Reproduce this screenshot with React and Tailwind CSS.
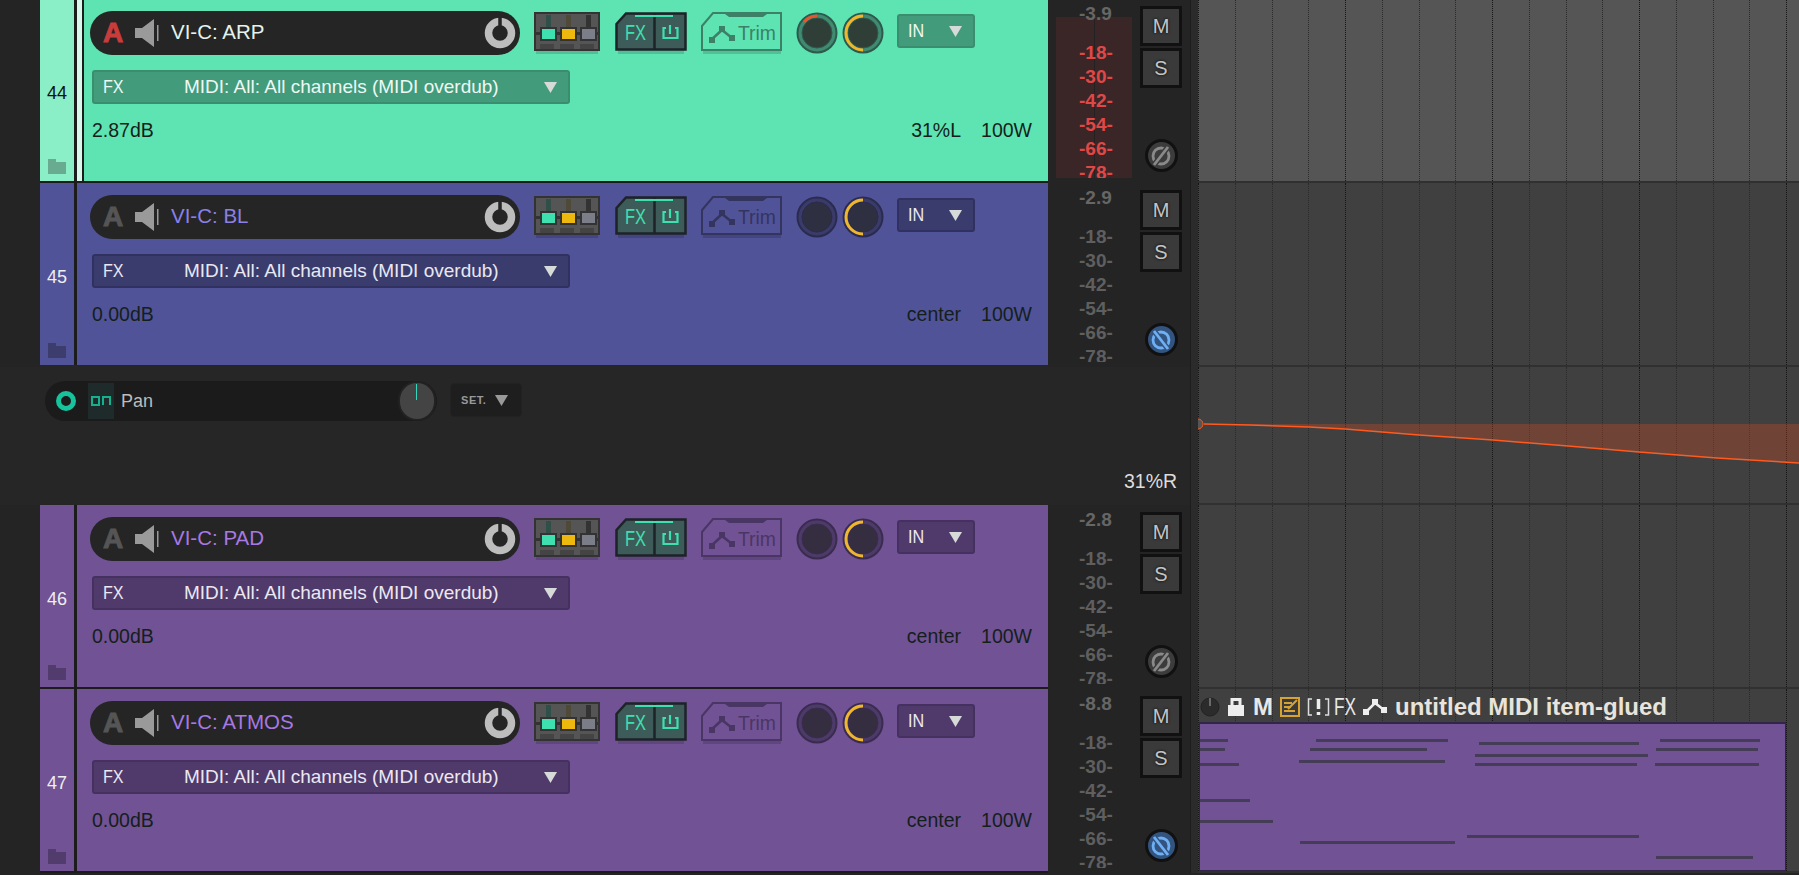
const sans = "font-['Liberation_Sans',Arial,sans-serif]";

const TRACKS = {
  arp: {
    num: "44", name: "VI-C: ARP", vol: "2.87dB", pan: "31%L", peak: "-3.9",
    body: "bg-[#5ee4b2]", numBg: "bg-[#8aeec6]", numText: "text-[#111]",
    nameText: "text-[#e4f3ee]", aText: "text-[#c93c3c]",
    bar: "bg-[#429c7b] border-[#3b8d6f]", barText: "text-[#eef8f4]",
    folder: "#68ab90", shadow: "#4fc097", trim: "#3c8068", ring: "#3f8a70", inner: "#2f3f38", ringEdge: "#2d5a4c",
    selected: true, meterHot: true, redArc: true, phaseOn: false,
  },
  bl: {
    num: "45", name: "VI-C: BL", vol: "0.00dB", pan: "center", peak: "-2.9",
    body: "bg-[#515398]", numBg: "bg-[#515398]", numText: "text-[#eee]",
    nameText: "text-[#8a80ea]", aText: "text-[#555]",
    bar: "bg-[#3b3c6e] border-[#303160]", barText: "text-[#e8e8f2]",
    folder: "#3c3d6c", shadow: "#444580", trim: "#34355f", ring: "#3a3b68", inner: "#2e2f40", ringEdge: "#2a2b50", phaseOn: true,
  },
  pad: {
    num: "46", name: "VI-C: PAD", vol: "0.00dB", pan: "center", peak: "-2.8",
    body: "bg-[#715295]", numBg: "bg-[#715295]", numText: "text-[#eee]",
    nameText: "text-[#a878e4]", aText: "text-[#555]",
    bar: "bg-[#503a6b] border-[#443160]", barText: "text-[#ece8f2]",
    folder: "#523c6e", shadow: "#60467f", trim: "#4a3664", ring: "#4d3a68", inner: "#342e40", ringEdge: "#3a2c50", phaseOn: false,
  },
  atmos: {
    num: "47", name: "VI-C: ATMOS", vol: "0.00dB", pan: "center", peak: "-8.8",
    body: "bg-[#715295]", numBg: "bg-[#715295]", numText: "text-[#eee]",
    nameText: "text-[#a878e4]", aText: "text-[#555]",
    bar: "bg-[#503a6b] border-[#443160]", barText: "text-[#ece8f2]",
    folder: "#523c6e", shadow: "#60467f", trim: "#4a3664", ring: "#4d3a68", inner: "#342e40", ringEdge: "#3a2c50", phaseOn: true,
  },
};

const SCALE = ["-18-", "-30-", "-42-", "-54-", "-66-", "-78-"];
const GRID = Array.from({ length: 17 }, (_, i) => i);

// x1, x2, y inside the item
const NOTES = [
  [1, 29, 17], [117, 249, 17], [280, 440, 20], [461, 561, 17],
  [1, 26, 26], [111, 228, 26], [457, 559, 26], [276, 449, 32],
  [1, 40, 41], [100, 246, 38], [276, 438, 41], [456, 560, 41],
  [1, 51, 77], [1, 74, 98], [101, 256, 119], [268, 440, 113], [457, 554, 134],
];

function GridLines() {
  return (
    <>
      {GRID.map((i) => (
        <div
          key={i}
          className={`absolute top-0 bottom-0 border-l border-dotted ${i % 4 === 0 ? "border-[#151515]" : "border-[#2a2a2a]"}`}
          style={{ left: i * 36.75 }}
        />
      ))}
    </>
  );
}

function Speaker() {
  return (
    <svg width="24" height="28" viewBox="0 0 24 28">
      <path d="M0 9h7L19 0v28L7 19H0z" fill="#9a9a9a" />
      <rect x="22" y="6" width="1.5" height="16" fill="#9a9a9a" />
    </svg>
  );
}

function PowerKnob() {
  return (
    <svg width="32" height="32" viewBox="0 0 32 32">
      <circle cx="16" cy="16" r="11.5" fill="none" stroke="#bdbdbd" strokeWidth="7.5" />
      <path d="M16 0v13" stroke="#252525" strokeWidth="3.5" />
    </svg>
  );
}

function MixerIcon({ t }) {
  return (
    <svg width="66" height="42" viewBox="0 0 66 42" className="shrink-0">
      <rect x="2" y="36" width="62" height="6" fill={t.shadow} />
      <rect x="1" y="1" width="64" height="37" fill="#555" stroke="#333" strokeWidth="2" />
      <rect x="12" y="3" width="5" height="18" fill="#2f4f48" />
      <rect x="32" y="3" width="5" height="18" fill="#4f4a38" />
      <rect x="52" y="3" width="5" height="18" fill="#333" />
      <rect x="2" y="20" width="62" height="3" fill="#333" />
      <rect x="7" y="16" width="15" height="12" fill="#3fe0b0" stroke="#333" strokeWidth="2" />
      <rect x="27" y="16" width="15" height="12" fill="#eeb90f" stroke="#333" strokeWidth="2" />
      <rect x="47" y="16" width="15" height="12" fill="#7b7e88" stroke="#333" strokeWidth="2" />
      <rect x="6" y="32" width="14" height="5" fill="#444" />
      <rect x="26" y="32" width="14" height="5" fill="#444" />
      <rect x="46" y="32" width="14" height="5" fill="#444" />
    </svg>
  );
}

function FxIcon({ t }) {
  return (
    <svg width="72" height="42" viewBox="0 0 72 42" className="shrink-0 ml-[15px]">
      <rect x="3" y="36" width="66" height="6" fill={t.shadow} />
      <path d="M1.5 12L11 1.5h59.5v36H1.5z" fill="#3d5b58" stroke="#1d2327" strokeWidth="2.5" />
      <path d="M39.5 2v35" stroke="#1d2327" strokeWidth="2.5" />
      <rect x="20" y="3" width="38" height="2" fill="#3fe0b0" />
      <text x="10" y="28" fill="#3fe0b0" fontFamily="Liberation Sans" fontSize="22" textLength="21" lengthAdjust="spacingAndGlyphs">FX</text>
      <path d="M55 13v9M51 16h-2.5v10h14V16H60" fill="none" stroke="#3fe0b0" strokeWidth="2.2" />
    </svg>
  );
}

function TrimIcon({ t }) {
  return (
    <svg width="82" height="42" viewBox="0 0 82 42" className="shrink-0 ml-[14px]">
      <rect x="2" y="37" width="78" height="5" fill={t.shadow} />
      <path d="M1 14L12 1h68v37H1z" fill="none" stroke={t.trim} strokeWidth="2" />
      <path d="M24 2h42l-4 3H28z" fill={t.trim} />
      <path d="M10 28l11-10 10 8" fill="none" stroke={t.trim} strokeWidth="2.5" />
      <rect x="8" y="25" width="6" height="6" fill={t.trim} />
      <rect x="18" y="14" width="6" height="6" fill={t.trim} />
      <rect x="28" y="23" width="6" height="6" fill={t.trim} />
      <text x="37" y="28" fill={t.trim} fontFamily="Liberation Sans" fontSize="20" textLength="38" lengthAdjust="spacingAndGlyphs">Trim</text>
    </svg>
  );
}

function Knob({ t, arc, color }) {
  return (
    <svg width="42" height="42" viewBox="0 0 42 42" className="shrink-0">
      <circle cx="21" cy="21" r="19.5" fill={t.ring} stroke={t.ringEdge} strokeWidth="2" />
      <circle cx="21" cy="21" r="15" fill={t.inner} stroke={t.ringEdge} strokeWidth="1" />
      {arc && <path d={arc} fill="none" stroke={color} strokeWidth="3" />}
    </svg>
  );
}

function Caret({ color = "#d6dad8" }) {
  return (
    <svg width="13" height="11" viewBox="0 0 13 11" className="shrink-0">
      <path d="M0 0h13L6.5 11z" fill={color} />
    </svg>
  );
}

function Folder({ color }) {
  return (
    <svg width="18" height="15" viewBox="0 0 18 15">
      <path d="M0 0h8v3h10v12H0z" fill={color} />
    </svg>
  );
}

function PhaseButton({ on }) {
  const c = on ? "#6fb0f5" : "#8a8a8a";
  return (
    <div className={`w-[33px] h-[33px] rounded-full border-[3px] border-[#111] flex items-center justify-center ${on ? "bg-[#33547f]" : "bg-[#3c3c3c]"}`}>
      <svg width="24" height="24" viewBox="0 0 24 24">
        <circle cx="12" cy="12" r="8" fill="none" stroke={c} strokeWidth="2.8" />
        {on ? (
          <path d="M5 3l14 18" stroke="#33547f" strokeWidth="5.5" />
        ) : (
          <path d="M19 3L5 21" stroke="#3c3c3c" strokeWidth="5.5" />
        )}
        {on ? (
          <path d="M5 3l14 18" stroke={c} strokeWidth="2.8" />
        ) : (
          <path d="M19 3L5 21" stroke={c} strokeWidth="2.8" />
        )}
      </svg>
    </div>
  );
}

function MSButton({ label }) {
  return (
    <div className={`w-[42px] h-[40px] bg-[#3a3a3a] border-[3px] border-[#111] flex items-center justify-center text-[20px] text-[#c4c4c4] [text-shadow:0_0_3px_#000] ${sans}`}>
      {label}
    </div>
  );
}

function MeterColumn({ t }) {
  return (
    <div className="flex w-[142px] h-full bg-[#242424] pl-[8px] pt-[7px]">
      <div className={`relative w-[78px] h-[179px] -mt-[7px] overflow-hidden pl-[23px] pt-[3px] font-bold text-[19px] leading-[24px] ${sans}`}>
        {t.meterHot && <div className="absolute left-0 right-[2px] top-[18px] bottom-0 bg-[#3a2626]" />}
        {t.meterHot && <div className="absolute left-[38px] w-[1px] top-[18px] bottom-0 bg-[#222]" />}
        <div className="relative text-[#666] h-[24px]">{t.peak}</div>
        <div className={`relative mt-[15px] ${t.meterHot ? "text-[#e04848]" : "text-[#5f5f5f]"}`}>
          {SCALE.map((s) => (
            <div key={s} className="h-[24px]">{s}</div>
          ))}
        </div>
      </div>
      <div className="flex flex-col ml-[6px] w-[42px] gap-[2px]">
        <MSButton label="M" />
        <MSButton label="S" />
        <div className="flex justify-center mt-[49px]">
          <PhaseButton on={t.phaseOn} />
        </div>
      </div>
    </div>
  );
}

function Divider() {
  return <div className="w-[8px] h-full bg-[#2b2b2b] border-l border-[#1d1d1d] shrink-0" />;
}

function Track({ t, gap, rowH, arrange, children }) {
  return (
    <div className={`flex ${rowH} shrink-0`}>
      <div className="flex w-[1048px] shrink-0 bg-[#242424]">
        <div className="w-[40px] shrink-0" />
        <div className={`flex flex-1 flex-col ${gap}`}>
          <div className="flex flex-1 min-h-0">
            <div className={`relative w-[34px] shrink-0 ${t.numBg}`}>
              <div className={`absolute left-0 right-0 top-[83px] text-center text-[18px] leading-[22px] ${t.numText} ${sans}`}>{t.num}</div>
              <div className="absolute left-[8px] bottom-[7px]"><Folder color={t.folder} /></div>
            </div>
            <div className="w-[3px] shrink-0 bg-[#1c1c1c]" />
            <div className={`relative flex-1 pl-[13px] pt-[12px] ${t.body}`}>
              {t.selected && <div className="absolute left-0 top-0 bottom-0 w-[7px] bg-[#d8f8ec] border-r-2 border-[#1c1c1c]" />}
              <div className="flex items-start">
                <div className={`flex items-center w-[430px] h-[44px] rounded-full bg-[#252525] pl-[13px] pr-[4px] ${sans}`}>
                  <span className={`w-[24px] font-bold text-[28px] leading-none [-webkit-text-stroke:1px_currentColor] ${t.aText}`}>{"A"}</span>
                  <span className="ml-[8px] flex"><Speaker /></span>
                  <span className={`ml-[12px] text-[20.5px] leading-none -mt-[2px] ${t.nameText}`}>{t.name}</span>
                  <span className="ml-auto flex"><PowerKnob /></span>
                </div>
                <div className="flex items-start ml-[14px] mt-[1px]">
                  <MixerIcon t={t} />
                  <FxIcon t={t} />
                  <TrimIcon t={t} />
                  <div className="flex ml-[13px] gap-[4px]">
                    <Knob t={t} arc={t.redArc ? "M21 4A17 17 0 0 0 8 10" : null} color="#e8552f" />
                    <Knob t={t} arc="M21 4A17 17 0 0 0 21 38" color="#f0b72c" />
                  </div>
                  <div className={`flex items-center justify-between w-[78px] h-[34px] ml-[13px] mt-[2px] rounded-[3px] border-2 pl-[9px] pr-[11px] text-[19px] ${t.bar} ${t.barText} ${sans}`}>
                    <span className="inline-block scale-x-[0.85] origin-left">IN</span>
                    <Caret />
                  </div>
                </div>
              </div>
              <div className={`relative flex items-center w-[478px] h-[34px] ml-[2px] mt-[15px] rounded-[3px] border-2 pl-[9px] pr-[11px] text-[19px] ${t.bar} ${t.barText} ${sans}`}>
                <span className="inline-block w-[81px] scale-x-[0.85] origin-left">FX</span>
                <span className="flex-1 whitespace-nowrap">MIDI: All: All channels (MIDI overdub)</span>
                <Caret />
              </div>
              <div className={`flex items-center h-[22px] ml-[2px] mt-[15px] text-[19.5px] leading-[22px] text-[#141f1c] ${sans}`}>
                <span>{t.vol}</span>
                <span className="ml-auto">{t.pan}</span>
                <span className="ml-[20px] mr-[16px]">100W</span>
              </div>
            </div>
          </div>
        </div>
      </div>
      <MeterColumn t={t} />
      <Divider />
      <Arrange className={arrange}>{children}</Arrange>
    </div>
  );
}

function Arrange({ className, children }) {
  return (
    <div className={`relative flex-1 h-full overflow-hidden border-b-2 border-[#303030] ${className}`}>
      <GridLines />
      {children}
    </div>
  );
}

function PanLane() {
  return (
    <div className="flex h-[138px] shrink-0">
      <div className="relative flex w-[1190px] shrink-0 bg-[#262626] pl-[45px] pt-[14px]">
        <div className={`flex items-center w-[392px] h-[40px] rounded-full bg-[#1b1b1b] pr-[3px] ${sans}`}>
          <svg width="20" height="20" viewBox="0 0 20 20" className="ml-[11px]">
            <circle cx="10" cy="10" r="7.5" fill="none" stroke="#17c39c" strokeWidth="5" />
          </svg>
          <div className="flex items-center justify-center w-[26px] h-[36px] ml-[12px] bg-[#1f2b2b]">
            <svg width="20" height="12" viewBox="0 0 20 12">
              <path d="M1 2h7v8H1zM12 10V2h7v8" fill="none" stroke="#17b08f" strokeWidth="2" />
            </svg>
          </div>
          <span className="ml-[7px] text-[18px] text-[#bcbcbc]">Pan</span>
          <div className="relative ml-auto w-[34px] h-[36px] rounded-full bg-[#444] shadow-[0_0_0_2px_#222]">
            <div className="absolute left-[16px] top-[1px] w-[1px] h-[16px] bg-[#34d6c0]" />
          </div>
        </div>
        <div className={`flex items-center justify-between w-[72px] h-[34px] ml-[13px] mt-[2px] rounded-[4px] border border-[#222] bg-[#1e1e1e] pl-[10px] pr-[13px] text-[11px] font-bold tracking-wider text-[#999] ${sans}`}>
          <span>SET.</span>
          <Caret color="#999" />
        </div>
        <span className={`absolute left-[1124px] top-[103px] text-[19.5px] leading-[22px] text-[#ddd] ${sans}`}>31%R</span>
      </div>
      <Divider />
      <Arrange className="bg-[#404040]">
        <svg width="601" height="138" viewBox="1198 367 601 138" className="absolute left-0 top-0">
          <path d="M1204 424L1250 425L1309 427L1345 429L1419 435L1493 440L1568 446L1639 452L1717 458L1799 463V424Z" fill="#e8501f" fillOpacity="0.28" />
          <path d="M1204 424L1250 425L1309 427L1345 429L1419 435L1493 440L1568 446L1639 452L1717 458L1799 463" fill="none" stroke="#ff5a1f" strokeWidth="1.5" />
          <path d="M1198 419A5 5 0 0 1 1198 429" fill="#555" stroke="#ff5a1f" strokeWidth="1" />
        </svg>
      </Arrange>
    </div>
  );
}

function MidiItem() {
  return (
    <>
      <div className={`absolute left-[1px] top-[4px] flex items-center h-[28px] text-[#e8e8e8] ${sans}`}>
        <svg width="20" height="20" viewBox="0 0 20 20" className="ml-[1px]">
          <circle cx="10" cy="10" r="9" fill="#2b2b2b" stroke="#222" />
          <path d="M10 1v8" stroke="#aaa" />
        </svg>
        <svg width="18" height="20" viewBox="0 0 18 20" className="ml-[7px]">
          <path d="M5 9V2.5h8V9" fill="none" stroke="#eee" strokeWidth="3" />
          <rect x="1" y="8" width="16" height="11" fill="#eee" />
        </svg>
        <span className="inline-block w-[20px] ml-[8px] font-bold text-[24px] leading-none">M</span>
        <svg width="20" height="20" viewBox="0 0 20 20" className="ml-[7px]">
          <rect x="1" y="1" width="18" height="18" fill="#3a3a3a" stroke="#d6a332" strokeWidth="2" />
          <path d="M4 6h8M4 10h7M4 14h11M8 12l9-9" stroke="#d6a332" strokeWidth="2" fill="none" />
        </svg>
        <svg width="23" height="20" viewBox="0 0 23 20" className="ml-[7px]">
          <path d="M5 2H1.5v16H5M18 2h3.5v16H18" fill="none" stroke="#ddd" strokeWidth="1.5" />
          <path d="M11.5 2v10M11.5 15v3" stroke="#eee" strokeWidth="3.5" />
        </svg>
        <span className="ml-[4px] inline-block w-[22px] text-[24px] leading-none scale-x-[0.72] origin-left">FX</span>
        <svg width="24" height="18" viewBox="0 0 24 18" className="ml-[7px]">
          <path d="M3 14L12 5l9 7" fill="none" stroke="#eee" strokeWidth="2.5" />
          <rect x="0" y="11" width="6" height="6" fill="#eee" />
          <rect x="9" y="1" width="6" height="6" fill="#eee" />
          <rect x="18" y="9" width="6" height="6" fill="#eee" />
        </svg>
        <span className="ml-[8px] font-bold text-[24px] leading-none whitespace-nowrap text-[#e8e4dc]">untitled MIDI item-glued</span>
      </div>
      <div className="absolute left-[1px] top-[33px] w-[587px] h-[150px] bg-[#715295] border-t-2 border-b-2 border-l border-r border-[#33254a]">
        {NOTES.map(([a, b, y], i) => (
          <div
            key={i}
            className="absolute h-[3px] bg-[#453c58]"
            style={{ left: a - 1, width: b - a, top: y - 2 }}
          />
        ))}
      </div>
    </>
  );
}

export default function App() {
  return (
    <div className="h-screen w-full overflow-hidden bg-[#242424]">
      <div className="flex flex-col -mt-[1px]">
        <Track t={TRACKS.arp} gap="border-b-2 border-[#1c1c1c]" rowH="h-[184px]" arrange="bg-[#555]" />
        <Track t={TRACKS.bl} gap="border-b-2 border-[#262626]" rowH="h-[184px]" arrange="bg-[#404040]" />
        <PanLane />
        <Track t={TRACKS.pad} gap="border-b-2 border-[#1c1c1c]" rowH="h-[184px]" arrange="bg-[#404040]" />
        <Track t={TRACKS.atmos} gap="border-b-2 border-[#1c1c1c]" rowH="h-[184px]" arrange="bg-[#404040]">
          <MidiItem />
        </Track>
      </div>
    </div>
  );
}
